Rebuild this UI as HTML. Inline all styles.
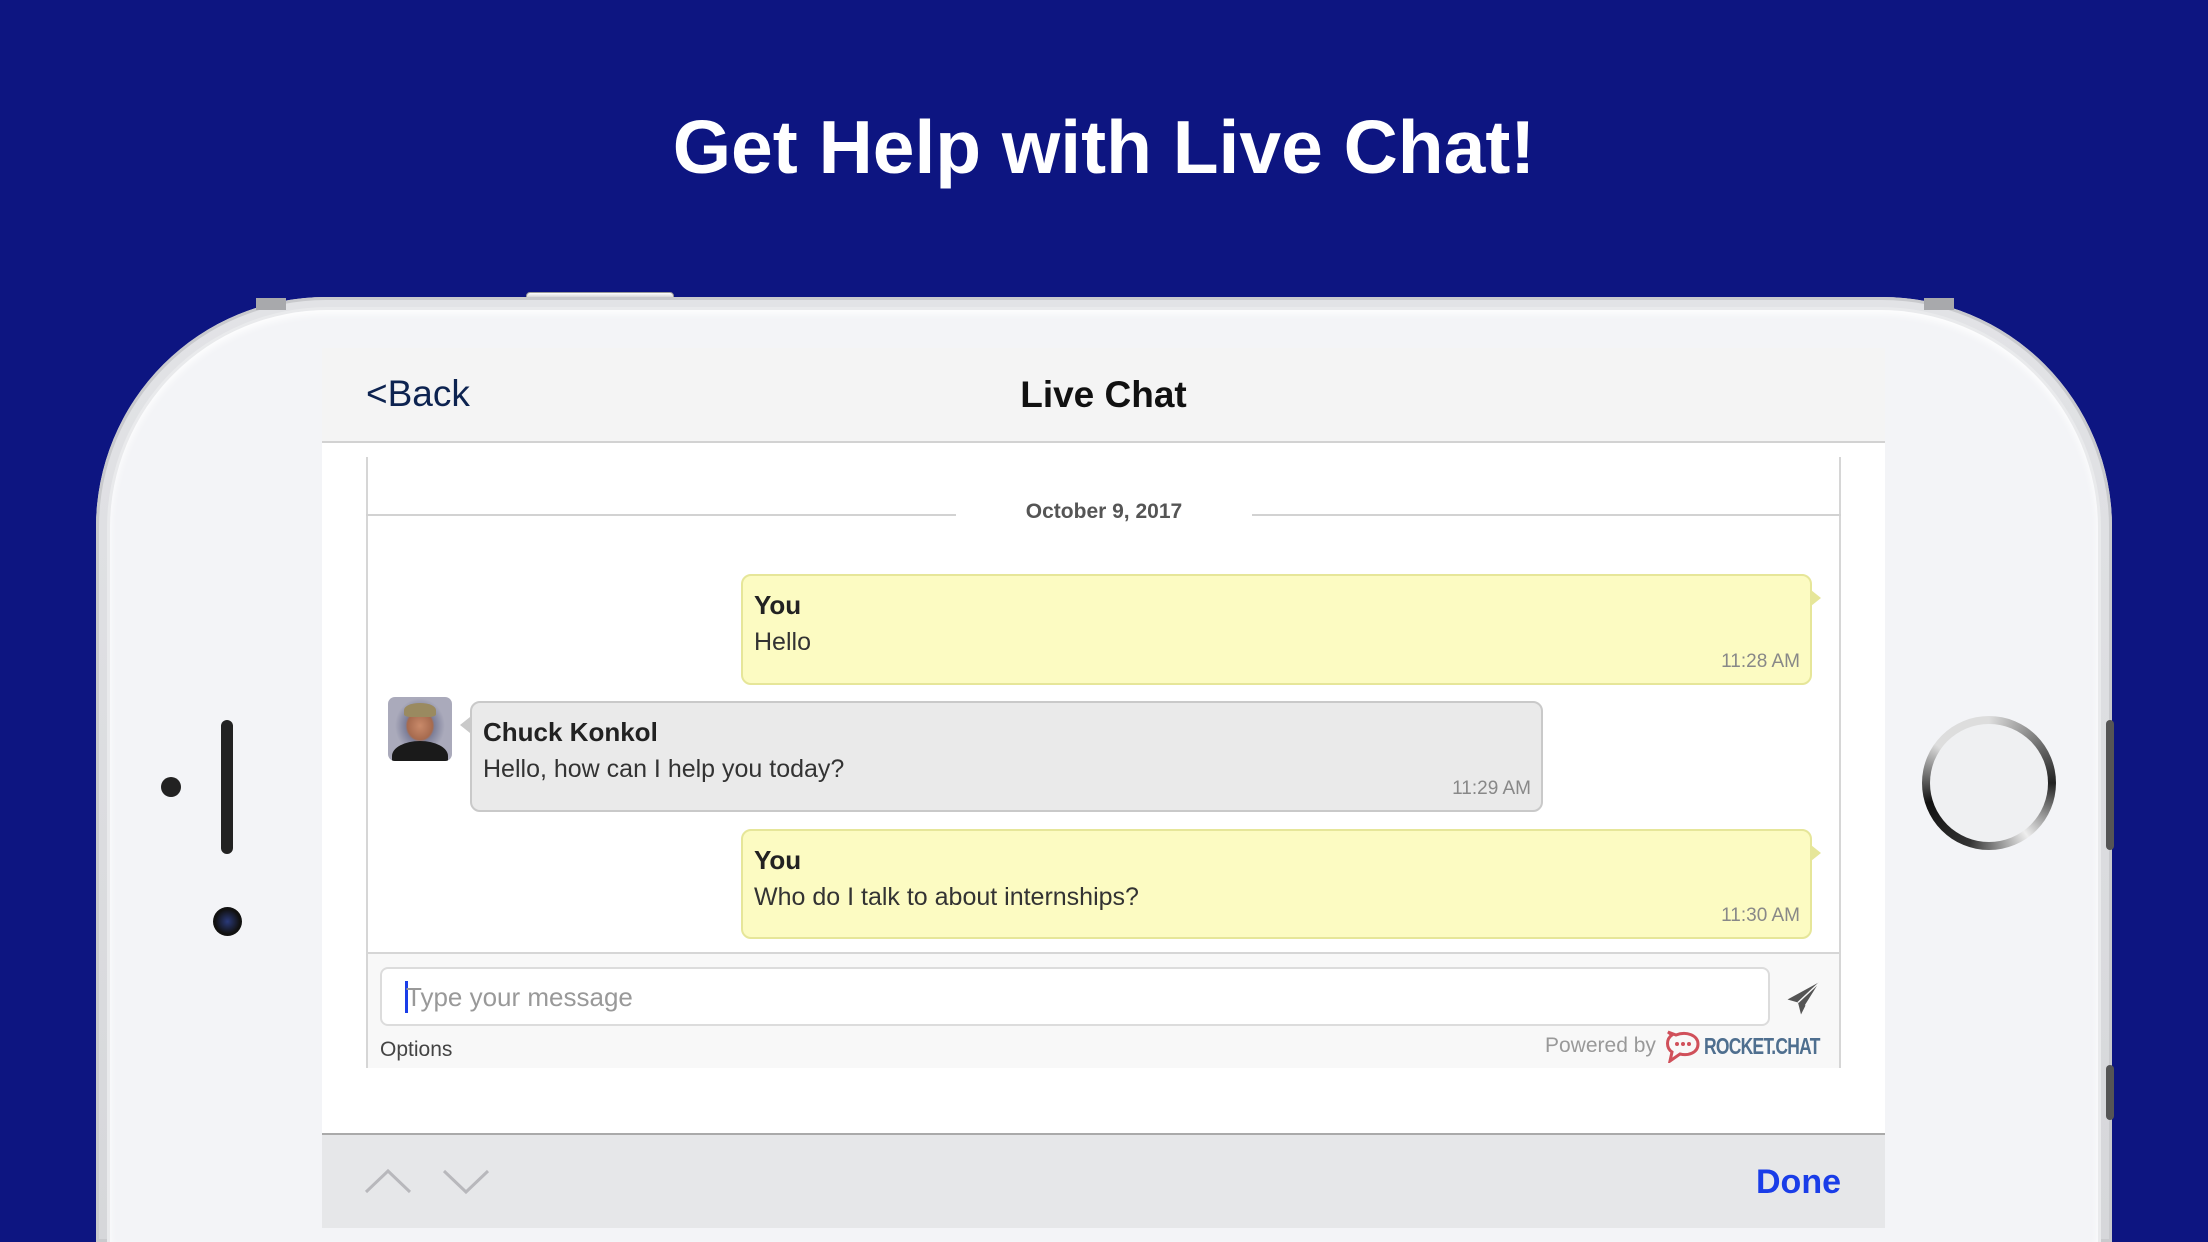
<!DOCTYPE html>
<html><head><meta charset="utf-8"><style>
*{margin:0;padding:0;box-sizing:border-box}
html,body{width:2208px;height:1242px;overflow:hidden}
body{background:#0d1581;font-family:"Liberation Sans",sans-serif;position:relative}
.abs{position:absolute}
h1{position:absolute;left:0;width:2208px;top:104px;text-align:center;color:#fff;font-size:75px;font-weight:bold}
.phone{left:96px;top:297px;width:2016px;height:945px;border-radius:230px 230px 0 0;background:linear-gradient(#e2e3e6,#d6d7da);box-shadow:inset 0 0 0 3px #c9cacd}
.face{left:110px;top:310px;width:1988px;height:932px;border-radius:218px 218px 0 0;background:#f3f4f7;box-shadow:inset 0 4px 8px rgba(255,255,255,.9),0 0 0 3px #e9eaec}
.screen{left:322px;top:348px;width:1563px;height:880px;background:#fff}
.nav{left:322px;top:348px;width:1563px;height:95px;background:#f4f4f4;border-bottom:2px solid #d2d2d2}
.bub{position:absolute;border-radius:10px;font-size:25px;color:#333}
.bub b{position:absolute;left:11px;top:14px;font-size:26px;color:#222}
.bub span{position:absolute;left:11px;top:52px}
.bub i{position:absolute;right:10px;bottom:10px;font-style:normal;font-size:19px;color:#888}
.y{background:#fcfbc2;border:2px solid #e6e699}
.g{background:#eaeaea;border:2px solid #c9c9c9}
</style></head><body>
<h1>Get Help with Live Chat!</h1>
<div class="abs" style="left:526px;top:292px;width:148px;height:9px;border-radius:4px;background:linear-gradient(#fff,#bbb);border:1px solid #999"></div>
<div class="abs phone"></div>
<div class="abs" style="left:256px;top:298px;width:30px;height:12px;background:#a8a9ac"></div>
<div class="abs" style="left:1924px;top:298px;width:30px;height:12px;background:#a8a9ac"></div>
<div class="abs" style="left:2106px;top:720px;width:8px;height:130px;border-radius:4px;background:#555"></div>
<div class="abs" style="left:2106px;top:1065px;width:8px;height:55px;border-radius:4px;background:#555"></div>
<div class="abs face"></div>
<div class="abs" style="left:221px;top:720px;width:12px;height:134px;border-radius:6px;background:#222"></div>
<div class="abs" style="left:161px;top:777px;width:20px;height:20px;border-radius:50%;background:#222"></div>
<div class="abs" style="left:213px;top:907px;width:29px;height:29px;border-radius:50%;background:radial-gradient(circle at 50% 50%,#2a3a7a 0,#111 60%)"></div>
<div class="abs" style="left:1922px;top:716px;width:134px;height:134px;border-radius:50%;background:conic-gradient(#ddd,#222 25%,#eee 40%,#333 55%,#111 70%,#ddd 85%,#ddd);"></div>
<div class="abs" style="left:1930px;top:724px;width:118px;height:118px;border-radius:50%;background:#eff0f2"></div>

<div class="abs screen"></div>
<div class="abs nav"></div>
<div class="abs" style="left:366px;top:373px;font-size:37px;color:#0d2350">&lt;Back</div>
<div class="abs" style="left:322px;width:1563px;top:374px;text-align:center;font-size:37px;font-weight:bold;color:#111">Live Chat</div>

<div class="abs" style="left:366px;top:457px;width:1475px;height:611px;border-left:2px solid #d6d6d6;border-right:2px solid #d6d6d6"></div>
<div class="abs" style="left:366px;top:514px;width:590px;height:2px;background:#d2d2d2"></div>
<div class="abs" style="left:1252px;top:514px;width:589px;height:2px;background:#d2d2d2"></div>
<div class="abs" style="left:956px;width:296px;top:500px;text-align:center;font-size:21px;font-weight:bold;color:#555">October 9, 2017</div>

<div class="bub y" style="left:741px;top:574px;width:1071px;height:111px"><b>You</b><span>Hello</span><i>11:28 AM</i></div>
<div class="abs" style="left:1811px;top:590px;border-left:10px solid #e6e699;border-top:8px solid transparent;border-bottom:8px solid transparent"></div>
<div class="abs" style="left:388px;top:697px;width:64px;height:64px;border-radius:7px;background:radial-gradient(ellipse at 50% 45%,#c98a6a 0,#a66a4e 28%,#7d7f99 32%,#aab 55%);overflow:hidden"><div style="position:absolute;left:4px;top:44px;width:56px;height:30px;border-radius:50% 50% 0 0;background:#1a1a1a"></div><div style="position:absolute;left:16px;top:6px;width:32px;height:14px;border-radius:50% 50% 20% 20%;background:#9a8a60"></div></div>
<div class="bub g" style="left:470px;top:701px;width:1073px;height:111px"><b>Chuck Konkol</b><span>Hello, how can I help you today?</span><i>11:29 AM</i></div>
<div class="abs" style="left:460px;top:717px;border-right:10px solid #c9c9c9;border-top:8px solid transparent;border-bottom:8px solid transparent"></div>
<div class="bub y" style="left:741px;top:829px;width:1071px;height:110px"><b>You</b><span>Who do I talk to about internships?</span><i>11:30 AM</i></div>
<div class="abs" style="left:1811px;top:845px;border-left:10px solid #e6e699;border-top:8px solid transparent;border-bottom:8px solid transparent"></div>

<div class="abs" style="left:368px;top:952px;width:1471px;height:116px;background:#f8f8f8;border-top:2px solid #d6d6d6"></div>
<div class="abs" style="left:380px;top:967px;width:1390px;height:59px;background:#fff;border:2px solid #dcdcdc;border-radius:8px"></div>
<div class="abs" style="left:405px;top:981px;width:3px;height:32px;background:#1a3de8"></div>
<div class="abs" style="left:406px;top:982px;font-size:26px;color:#999">Type your message</div>
<svg class="abs" style="left:1786px;top:980px" width="36" height="36" viewBox="0 0 24 24"><path d="M23 1 L1 13 L8 15 L10 23 L13 17 Z" fill="#555"/><path d="M8 15 L23 1 L13 17" fill="none" stroke="#f8f8f8" stroke-width="1"/></svg>
<div class="abs" style="left:380px;top:1038px;font-size:21px;color:#444">Options</div>
<div class="abs" style="left:1545px;top:1034px;font-size:21px;color:#999">Powered by</div>
<svg class="abs" style="left:1664px;top:1029px" width="36" height="34" viewBox="0 0 36 34"><path d="M4 3 L12 6 C22 2 34 6 34 15 C34 24 24 27 16 25 L6 32 L8 23 C2 19 2 10 8 6 Z" fill="none" stroke="#d0505a" stroke-width="3"/><circle cx="13" cy="15" r="2" fill="#d0505a"/><circle cx="19" cy="15" r="2" fill="#d0505a"/><circle cx="25" cy="15" r="2" fill="#d0505a"/></svg>
<div class="abs" style="left:1704px;top:1033px;font-size:23px;font-weight:bold;color:#4f6f8f;letter-spacing:-1px;transform:scaleX(0.76);transform-origin:left">ROCKET.CHAT</div>

<div class="abs" style="left:322px;top:1133px;width:1563px;height:95px;background:#e6e7e9;border-top:2px solid #aaa"></div>
<svg class="abs" style="left:364px;top:1166px" width="130" height="30"><path d="M2 26 L24 5 L46 26 M80 5 L102 26 L124 5" fill="none" stroke="#b8b8bc" stroke-width="3"/></svg>
<div class="abs" style="left:1756px;top:1163px;font-size:34px;font-weight:bold;color:#1a3de8">Done</div>
</body></html>
